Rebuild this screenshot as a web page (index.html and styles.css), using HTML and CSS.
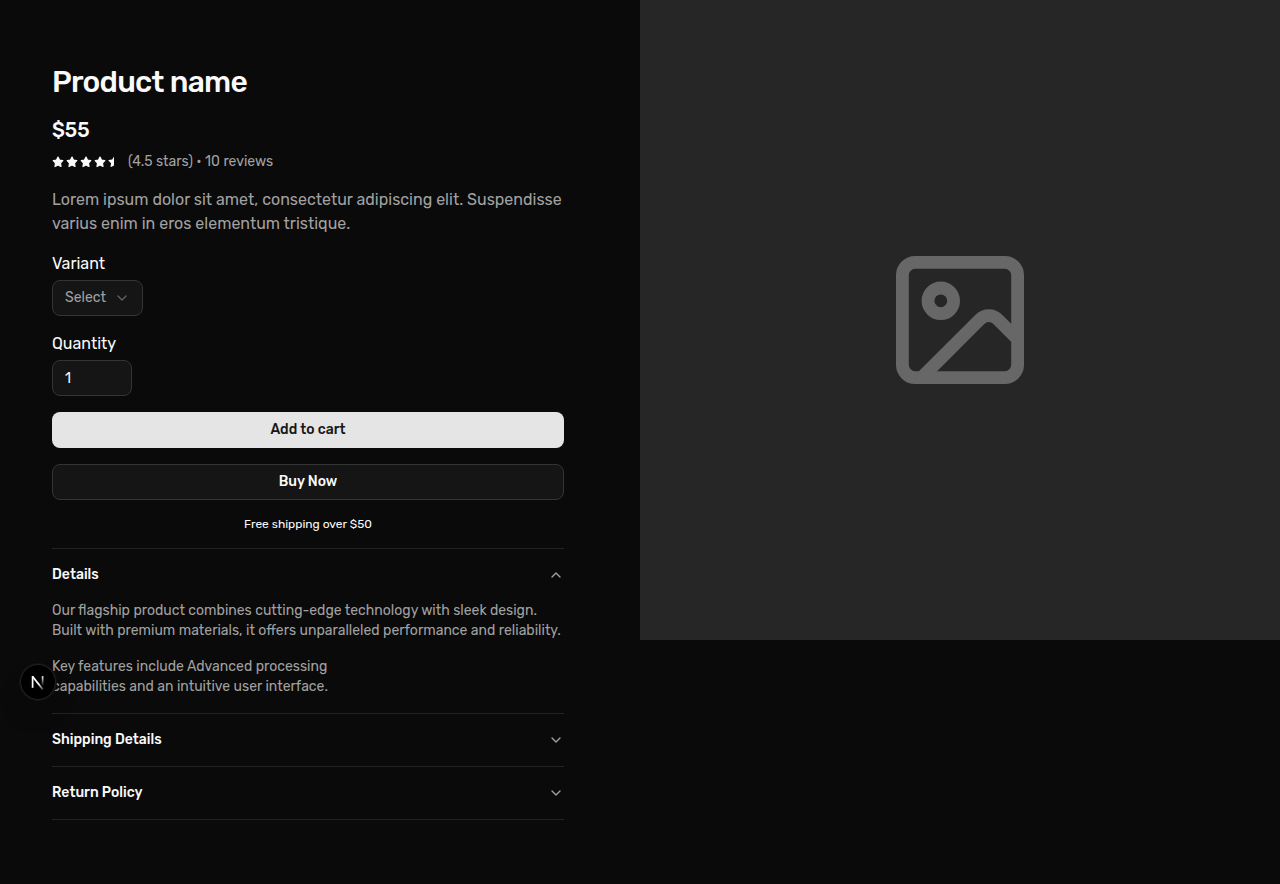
FILE: index.html
```html
<!DOCTYPE html>
<html lang="en">
<head>
<meta charset="utf-8">
<title>Product name</title>
<link rel="stylesheet" href="styles.css">
</head>
<body>
<main class="product">
  <section class="info">
    <h1 class="title">Product name</h1>
    <p class="price">$55</p>
    <div class="rating">
      <svg class="stars" viewBox="0 0 68 12" width="68" height="12" fill="currentColor">
        <defs><path id="star" d="M6 1.1 7.5 4.1 10.8 4.6 8.5 7 9 10.5 6 9 3 10.5 3.5 7 1.2 4.6 4.5 4.1Z" stroke="currentColor" stroke-width="1.2" stroke-linejoin="round"/></defs>
        <use href="#star"/><use href="#star" x="14"/><use href="#star" x="28"/><use href="#star" x="42"/>
        <path d="M62 .5V9.4L59 11.1Q58.4 11.2 58.5 10.6L59.1 7.2 56.5 4.7Q56.3 4.2 56.8 4.1L60.2 3.6Z"/>
      </svg>
      <span>(4.5 stars) • 10 reviews</span>
    </div>
    <p class="description">Lorem ipsum dolor sit amet, consectetur adipiscing elit. Suspendisse<br>varius enim in eros elementum tristique.</p>
    <div class="field">
      <label class="label">Variant</label>
      <button class="select"><span>Select</span><svg class="chevron" viewBox="0 0 24 24"><path d="m6 9 6 6 6-6"/></svg></button>
    </div>
    <div class="field">
      <label class="label">Quantity</label>
      <div class="quantity">1</div>
    </div>
    <button class="button primary">Add to cart</button>
    <button class="button outline">Buy Now</button>
    <p class="shipping">Free shipping over $50</p>
    <div class="accordion">
      <div class="item">
        <div class="item-head"><span>Details</span><svg class="chevron" viewBox="0 0 24 24"><path d="m6 15 6-6 6 6"/></svg></div>
        <div class="item-body">
          <p>Our flagship product combines cutting-edge technology with sleek design.<br>Built with premium materials, it offers unparalleled performance and reliability.</p>
          <p>Key features include Advanced processing<br>capabilities and an intuitive user interface.</p>
        </div>
      </div>
      <div class="item">
        <div class="item-head"><span>Shipping Details</span><svg class="chevron" viewBox="0 0 24 24"><path d="m6 9 6 6 6-6"/></svg></div>
      </div>
      <div class="item">
        <div class="item-head"><span>Return Policy</span><svg class="chevron" viewBox="0 0 24 24"><path d="m6 9 6 6 6-6"/></svg></div>
      </div>
    </div>
  </section>
  <div class="media">
    <svg class="image-icon" viewBox="2 2 20 20"><rect x="3" y="3" width="18" height="18" rx="2"/><circle cx="9" cy="9" r="2"/><path d="m21 15-3.086-3.086a2 2 0 0 0-2.828 0L6 21"/></svg>
  </div>
</main>
<div class="dev-badge">
  <svg viewBox="0 0 36 36" width="36" height="36" fill="none" stroke-width="1.7">
    <defs>
      <linearGradient id="diag" x1="20" y1="19" x2="24" y2="25" gradientUnits="userSpaceOnUse"><stop stop-color="#fff"/><stop offset="1" stop-color="#fff" stop-opacity="0.2"/></linearGradient>
      <linearGradient id="bar" x1="0" y1="12" x2="0" y2="22" gradientUnits="userSpaceOnUse"><stop stop-color="#fff"/><stop offset="1" stop-color="#fff" stop-opacity="0"/></linearGradient>
    </defs>
    <path d="M12.6 23.8V12.2" stroke="#fff"/><path d="M12.4 12.2 23 25.6" stroke="url(#diag)"/><path d="M22.6 12.2V22" stroke="url(#bar)"/>
  </svg>
</div>
</body>
</html>
```
FILE: styles.css
```css
* { box-sizing: border-box; }
body { margin: 0; background: #0a0a0a; color: #fafafa; font: 14px/20px Rubik, Roboto, sans-serif; }
h1, p { margin: 0; }
button { font: inherit; color: inherit; }
.product { display: grid; grid-template-columns: 640px 640px; height: 884px; overflow: hidden; }
.info { width: 564px; padding: 64px 0 0 52px; display: flex; flex-direction: column; }
.title { font-size: 30px; line-height: 36px; font-weight: 500; letter-spacing: -0.025em; }
.price { margin-top: 16px; font-size: 20px; line-height: 28px; font-weight: 500; }
.rating { margin-top: 8px; height: 20px; display: flex; align-items: center; gap: 8px; color: #a1a1a1; }
.stars { color: #fafafa; }
.description { margin-top: 16px; font-size: 16px; line-height: 24px; color: #a1a1a1; white-space: nowrap; }
.field { margin-top: 16px; display: flex; flex-direction: column; align-items: flex-start; gap: 4px; }
.label { font-size: 16px; line-height: 24px; }
.select { width: 91px; height: 36px; padding: 0 12px; display: flex; align-items: center; gap: 8px; border: 1px solid #343434; border-radius: 8px; background: #151515; color: #a1a1a1; }
.chevron { width: 16px; height: 16px; flex: none; fill: none; stroke: #a1a1a1; stroke-width: 2; stroke-linecap: round; stroke-linejoin: round; }
.select .chevron { stroke: #616161; }
.quantity { width: 80px; height: 36px; padding: 8px 12px 6px; border: 1px solid #343434; border-radius: 8px; background: #151515; }
.button { margin-top: 16px; height: 36px; width: 100%; padding: 0; border: 0; border-radius: 8px; font-weight: 500; }
.primary { background: #e5e5e5; color: #171717; }
.outline { border: 1px solid #343434; background: #151515; }
.shipping { margin-top: 16px; font-size: 12px; line-height: 16px; text-align: center; }
.accordion { margin-top: 16px; border-top: 1px solid #222; }
.item { border-bottom: 1px solid #222; }
.item-head { height: 52px; display: flex; align-items: center; justify-content: space-between; font-weight: 500; }
.item-body { padding-bottom: 16px; display: flex; flex-direction: column; gap: 16px; color: #a1a1a1; white-space: nowrap; }
.media { height: 640px; background: #262626; display: flex; align-items: center; justify-content: center; }
.image-icon { width: 128px; height: 128px; fill: none; stroke: #676767; stroke-width: 2; stroke-linecap: round; stroke-linejoin: round; }
.dev-badge { position: absolute; left: 20px; top: 664px; width: 36px; height: 36px; border-radius: 50%; background: #000; box-shadow: 0 0 0 1px #131313, inset 0 0 0 1px #222, 0 16px 32px -8px rgba(0,0,0,.24); }
.dev-badge svg { display: block; }
```
